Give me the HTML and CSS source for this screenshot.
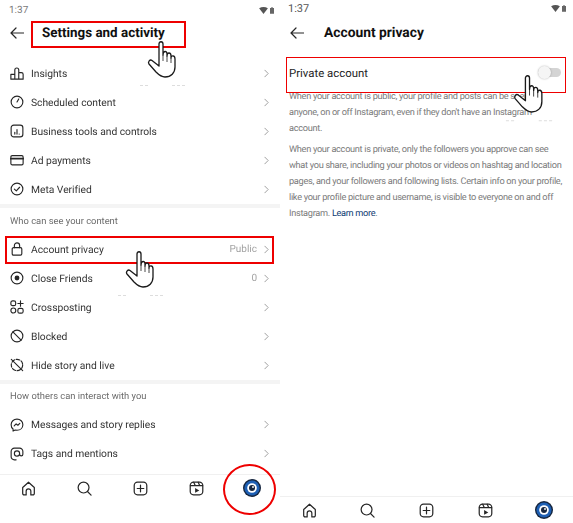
FILE: index.html
```html
<!DOCTYPE html>
<html lang="en">
<head>
<meta charset="utf-8">
<title>Account privacy</title>
<link rel="stylesheet" href="styles.css">
</head>
<body>
<svg class="defs" width="0" height="0" aria-hidden="true">
  <defs>
    <symbol id="hand" viewBox="0 0 28 37" overflow="visible">
      <path class="hand-fill" d="M11 3C11 0 15 0 15 3V14C15 9.500 19 9.500 19 13V15C19 11 23 11 23 15V17C23 14 27 14 27 18V26C27 32 23 36 17 36C13 36 11 34 8 31L1 23C-.5 21 2 18 4 19.500L11 25Z"/>
      <path class="hand-thin" d="M15 14V20M19 15V21M23 17V22"/>
      <path class="speck" d="M-8 44.500H2M24 44.500H37"/>
    </symbol>
    <symbol id="i-back" viewBox="0 0 14 12"><path d="M13.500 6H1M6 1 1 6l5 5"/></symbol>
    <symbol id="i-chev" viewBox="0 0 6 10"><path d="m1 1 4 4-4 4"/></symbol>
    <symbol id="i-insights" viewBox="0 0 16 16"><path d="M1 9.500h4.500V15H1zM5.500 4.500a2 2 0 0 1 4.500 0V15H5.500zM10 7.500h3a2 2 0 0 1 2 2V15h-5z"/></symbol>
    <symbol id="i-clock" viewBox="0 0 16 16"><circle cx="8" cy="8" r="6.700"/><path d="M8 8l2-3.500"/></symbol>
    <symbol id="i-business" viewBox="0 0 16 16"><rect x="1.300" y="1.300" width="13.400" height="13.400" rx="3"/><path d="M5.500 11.500v-2M8 11.500v-5M10.500 11.500h0"/></symbol>
    <symbol id="i-card" viewBox="0 0 16 16"><rect x="1" y="3" width="14" height="10.500" rx="1.500"/><path class="thick" d="M1 6.500h14"/></symbol>
    <symbol id="i-verified" viewBox="0 0 16 16"><circle cx="8" cy="8" r="6.700"/><path d="m5 8.200 2.200 2L11 6"/></symbol>
    <symbol id="i-lock" viewBox="0 0 16 16"><rect x="2.500" y="6.500" width="11" height="8.500" rx="1.500"/><path d="M5 6.500V4a3 3 0 0 1 6 0v2.500"/></symbol>
    <symbol id="i-friends" viewBox="0 0 16 16"><circle cx="8" cy="8" r="6.700"/><circle class="solid" cx="8" cy="8" r="2.800"/></symbol>
    <symbol id="i-cross" viewBox="0 0 16 16"><rect x="1" y="1" width="5.500" height="5.500" rx="2"/><circle cx="3.800" cy="12" r="2.800"/><rect x="9" y="9.500" width="6" height="5.500" rx="2"/><path d="M12 1v6M9 4h6"/></symbol>
    <symbol id="i-block" viewBox="0 0 16 16"><circle cx="8" cy="8" r="6.700"/><path d="m3.300 3.300 9.400 9.400"/></symbol>
    <symbol id="i-hide" viewBox="0 0 16 16"><circle cx="8" cy="8" r="6.500" stroke-dasharray="4 1.800"/><path d="m1.500 1.500 13 13"/></symbol>
    <symbol id="i-msg" viewBox="0 0 16 16"><path d="M8 1.300c3.900 0 6.700 2.800 6.700 6.400S11.900 14 8 14l-2-.3-2.500 1.200v-2.300C2 11.500 1.300 9.700 1.300 7.700 1.300 4.100 4.100 1.300 8 1.300Z"/><path d="m4.800 9 2.200-2.200 2 1.500L11.200 6.200"/></symbol>
    <symbol id="i-tag" viewBox="0 0 16 16"><path d="M7 14.700H5a3.700 3.700 0 0 1-3.700-3.700V5A3.700 3.700 0 0 1 5 1.300h6A3.700 3.700 0 0 1 14.700 5v3.200c0 2.600-3.700 2.600-3.700 0"/><circle cx="8" cy="7.500" r="3"/></symbol>
    <symbol id="n-home" viewBox="0 0 16 16"><path d="M5.500 14.800H3.300a1.500 1.500 0 0 1-1.500-1.500V7L8 1.300 14.200 7v6.300a1.500 1.500 0 0 1-1.500 1.500h-2.200v-4a2.500 2.500 0 0 0-5 0Z"/></symbol>
    <symbol id="n-search" viewBox="0 0 16 16"><circle cx="7" cy="7" r="5.800"/><path d="m11.200 11.200 3.800 3.800"/></symbol>
    <symbol id="n-add" viewBox="0 0 16 16"><rect x="1.300" y="1.300" width="13.400" height="13.400" rx="3.500"/><path d="M8 4.500v7M4.500 8h7"/></symbol>
    <symbol id="n-reels" viewBox="0 0 16 16"><rect x="1.300" y="1.300" width="13.400" height="13.400" rx="3.500"/><path d="M1.500 5h13M5 1.300 6.800 5M9.800 1.300 11.500 5"/><path class="solid" d="M6.500 7.500 11 10l-4.500 2.500Z"/></symbol>
    <symbol id="n-avatar" viewBox="0 0 18 18">
      <circle class="av-ring" cx="9" cy="9" r="9"/>
      <circle class="av-blue" cx="9" cy="9" r="7.600"/>
      <circle class="av-white" cx="9" cy="9" r="4.800"/>
      <circle class="av-dark" cx="9" cy="9" r="3"/>
      <circle class="av-white" cx="10" cy="8" r=".9"/>
    </symbol>
  </defs>
</svg>

<main class="screens">
  <section class="panel panel-left">
    <div class="status">
      <span class="time">1:37</span>
      <span class="status-icons">
        <svg class="wifi" viewBox="0 0 10 8"><path d="M0 1.500C3 -.5 7 -.5 10 1.500L5 8Z"/></svg>
        <svg class="battery" viewBox="0 0 5 8"><path d="M1.500 0h2v1H5v7H0V1h1.500Z"/></svg>
      </span>
    </div>
    <header class="topbar">
      <svg class="icon back"><use href="#i-back"/></svg>
      <h1 class="title">Settings and activity</h1>
    </header>

    <ul class="list list-first">
      <li class="row"><svg class="icon"><use href="#i-insights"/></svg><span class="label">Insights</span><svg class="chev"><use href="#i-chev"/></svg></li>
      <li class="row"><svg class="icon"><use href="#i-clock"/></svg><span class="label">Scheduled content</span><svg class="chev"><use href="#i-chev"/></svg></li>
      <li class="row"><svg class="icon"><use href="#i-business"/></svg><span class="label">Business tools and controls</span><svg class="chev"><use href="#i-chev"/></svg></li>
      <li class="row"><svg class="icon"><use href="#i-card"/></svg><span class="label">Ad payments</span><svg class="chev"><use href="#i-chev"/></svg></li>
      <li class="row"><svg class="icon"><use href="#i-verified"/></svg><span class="label">Meta Verified</span><svg class="chev"><use href="#i-chev"/></svg></li>
    </ul>
    <div class="divider"></div>
    <h2 class="section section-a">Who can see your content</h2>
    <ul class="list">
      <li class="row"><svg class="icon"><use href="#i-lock"/></svg><span class="label">Account privacy</span><span class="value">Public</span><svg class="chev"><use href="#i-chev"/></svg></li>
      <li class="row"><svg class="icon"><use href="#i-friends"/></svg><span class="label">Close Friends</span><span class="value">0</span><svg class="chev"><use href="#i-chev"/></svg></li>
      <li class="row"><svg class="icon"><use href="#i-cross"/></svg><span class="label">Crossposting</span><svg class="chev"><use href="#i-chev"/></svg></li>
      <li class="row"><svg class="icon"><use href="#i-block"/></svg><span class="label">Blocked</span><svg class="chev"><use href="#i-chev"/></svg></li>
      <li class="row"><svg class="icon"><use href="#i-hide"/></svg><span class="label">Hide story and live</span><svg class="chev"><use href="#i-chev"/></svg></li>
    </ul>
    <div class="divider"></div>
    <h2 class="section section-b">How others can interact with you</h2>
    <ul class="list">
      <li class="row"><svg class="icon"><use href="#i-msg"/></svg><span class="label">Messages and story replies</span><svg class="chev"><use href="#i-chev"/></svg></li>
      <li class="row"><svg class="icon"><use href="#i-tag"/></svg><span class="label">Tags and mentions</span><svg class="chev"><use href="#i-chev"/></svg></li>
    </ul>

    <nav class="nav nav-left">
      <svg class="nav-icon"><use href="#n-home"/></svg>
      <svg class="nav-icon"><use href="#n-search"/></svg>
      <svg class="nav-icon"><use href="#n-add"/></svg>
      <svg class="nav-icon"><use href="#n-reels"/></svg>
      <svg class="nav-avatar"><use href="#n-avatar"/></svg>
    </nav>

    <div class="mark box-title"></div>
    <div class="mark box-privacy"></div>
    <div class="mark circle-profile"></div>
    <svg class="hand hand-title"><use href="#hand"/></svg>
    <svg class="hand hand-privacy"><use href="#hand"/></svg>
  </section>

  <section class="panel panel-right">
    <div class="status status-right">
      <span class="time">1:37</span>
      <span class="status-icons">
        <svg class="wifi" viewBox="0 0 10 8"><path d="M0 1.500C3 -.5 7 -.5 10 1.500L5 8Z"/></svg>
        <svg class="battery" viewBox="0 0 5 8"><path d="M1.500 0h2v1H5v7H0V1h1.500Z"/></svg>
      </span>
    </div>
    <header class="topbar topbar-right">
      <svg class="icon back"><use href="#i-back"/></svg>
      <h1 class="title">Account privacy</h1>
    </header>
    <div class="setting">
      <span class="setting-label">Private account</span>
      <span class="switch"><span class="knob"></span></span>
    </div>
    <div class="copy">
      <p>When your account is public, your profile and posts can be seen by anyone, on or off Instagram, even if they don't have an Instagram account.</p>
      <p>When your account is private, only the followers you approve can see what you share, including your photos or videos on hashtag and location pages, and your followers and following lists. Certain info on your profile, like your profile picture and username, is visible to everyone on and off Instagram. <a class="link" href="#">Learn more</a>.</p>
    </div>
    <nav class="nav nav-right">
      <svg class="nav-icon"><use href="#n-home"/></svg>
      <svg class="nav-icon"><use href="#n-search"/></svg>
      <svg class="nav-icon"><use href="#n-add"/></svg>
      <svg class="nav-icon"><use href="#n-reels"/></svg>
      <svg class="nav-avatar"><use href="#n-avatar"/></svg>
    </nav>
    <div class="mark box-private"></div>
    <svg class="hand hand-private"><use href="#hand"/></svg>
  </section>
</main>
</body>
</html>
```

FILE: styles.css
```css
* { box-sizing: border-box; }
html, body { margin: 0; height: 100%; background: #fff; overflow: hidden; }
body { font-family: Roboto, "Liberation Sans", sans-serif; color: #262626; text-rendering: geometricPrecision; }
.defs { position: absolute; }
ul { list-style: none; margin: 0; padding: 0; }
h1, h2, p { margin: 0; }

.screens { display: flex; width: 573px; height: 523px; }
.panel { position: relative; display: flex; flex-direction: column; height: 523px; }
.panel-left { width: 280px; }
.panel-right { width: 293px; }

.status { display: flex; justify-content: space-between; align-items: center; height: 20px; padding: 0 6px 0 9px; font-size: 10px; color: #7a7a7a; }
.status-right { height: 16px; padding: 0 7px 0 8px; font-size: 11px; color: #555; }
.status-icons { display: flex; align-items: center; gap: 2px; }
.wifi { width: 9px; height: 7px; fill: #555; }
.battery { width: 4px; height: 7px; fill: #666; }

.topbar { display: flex; align-items: center; height: 26px; padding-left: 10px; }
.topbar-right { height: 33px; }
.icon, .back, .chev, .nav-icon { fill: none; stroke: #262626; stroke-width: 1.3; stroke-linecap: round; stroke-linejoin: round; }
.back { width: 14px; height: 12px; stroke-width: 1.200; }
.title { font-size: 13.400px; font-weight: 700; color: #111; margin-left: 18px; white-space: nowrap; }
.topbar-right .title { margin-left: 20px; font-size: 13.800px; }

.list, .section { filter: blur(.3px); }
.list-first { margin-top: 12.500px; }
.row { display: flex; align-items: center; height: 29px; padding: 0 11px 0 10px; }
.icon { width: 14px; height: 14px; flex: none; }
.label { margin-left: 7px; font-size: 10.300px; letter-spacing: -.03px; color: #333; flex: 1; white-space: nowrap; }
.value { font-size: 10px; color: #a3a3a3; margin-right: 7px; }
.chev { width: 5px; height: 9px; stroke: #a0a0a0; stroke-width: 1.200; flex: none; }
.thick { stroke-width: 2; }
.solid { fill: #262626; stroke: none; }

.divider { height: 4px; background: #f4f4f4; flex: none; }
.section { font-size: 9.400px; font-weight: 400; color: #6b6b6b; padding-left: 10px; white-space: nowrap; display: flex; align-items: center; }
.section-a { height: 27px; }
.section-b { height: 26.500px; }

.nav { position: absolute; left: 0; right: 0; display: grid; align-items: center; justify-items: center; border-top: 1px solid #f0f0f0; }
.nav-left { top: 474px; height: 27px; grid-template-columns: repeat(5, 56px); }
.nav-right { top: 496px; height: 27px; grid-template-columns: repeat(5, 58.600px); }
.nav-icon { width: 15px; height: 15px; stroke-width: 1.300; }
.nav-avatar { width: 18px; height: 18px; }
.av-ring, .av-dark { fill: #16263f; }
.av-blue { fill: #1d5fb4; }
.av-white { fill: #fff; }

.setting { display: flex; align-items: center; justify-content: space-between; height: 31px; margin-top: 8.500px; padding: 0 12px 0 9px; flex: none; }
.setting-label { font-size: 11.400px; color: #262626; }
.switch { position: relative; display: block; width: 23px; height: 9px; margin-bottom: 2px; border-radius: 5px; background: #d4d4d4; }
.knob { position: absolute; left: 0; top: -2px; width: 13px; height: 13px; border-radius: 50%; background: #f5f5f5; box-shadow: 0 0 2px rgba(0,0,0,.3); }
.copy { padding: 0 8px 0 9px; font-size: 9.200px; letter-spacing: -.3px; line-height: 16px; color: #7a7a7a; }
.copy p + p { margin-top: 5px; }
.link { color: #0d3b73; text-decoration: none; }

.mark { position: absolute; border: 2px solid #ee0000; }
.box-title { left: 31px; top: 21px; width: 155px; height: 27px; }
.box-privacy { left: 5px; top: 236px; width: 269px; height: 28px; }
.box-private { left: 6px; top: 57px; width: 280px; height: 36px; border-width: 1px; }
.circle-profile { left: 223px; top: 464px; width: 53px; height: 51px; border-radius: 50%; }

.hand { position: absolute; overflow: visible; }
.hand-title { left: 148px; top: 41px; width: 28px; height: 37px; }
.hand-privacy { left: 126px; top: 251px; width: 28px; height: 37px; }
.hand-private { left: 234px; top: 75px; width: 29px; height: 38px; }
.hand-fill { fill: #fff; stroke: #1a1a1a; stroke-width: 1.300; stroke-linejoin: round; }
.hand-thin { fill: none; stroke: #1a1a1a; stroke-width: .8; }
.speck { fill: none; stroke: #ddd; stroke-width: 1; stroke-dasharray: 3 2; }
```
